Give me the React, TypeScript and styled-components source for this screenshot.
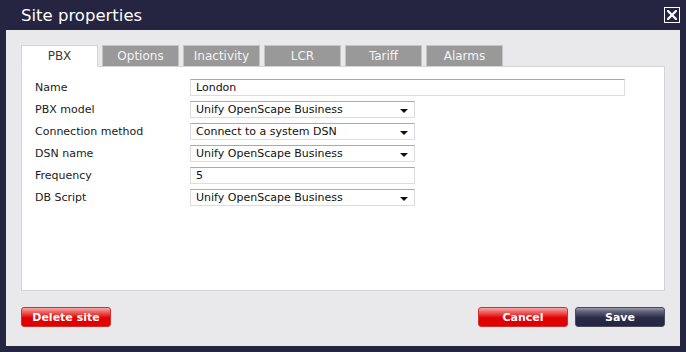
import React, {useState} from 'react';
import styled, {createGlobalStyle} from "styled-components";

const GlobalStyle = createGlobalStyle`
  html, body {
    margin: 0;
    padding: 0;
    background: #252541;
  }
  body {
    font-family: "DejaVu Sans", Verdana, sans-serif;
  }
`

const Dialog = styled.div`
  width: 686px;
  height: 352px;
  display: flex;
  flex-direction: column;
  background: #252541;
`
const TitleBar = styled.div`
  height: 30px;
  display: flex;
  align-items: center;
  justify-content: space-between;
  padding: 0 6px 0 21px;
  box-sizing: border-box;
  color: #ffffff;
  font-size: 16.5px;
`
const CloseButton = styled.div`
  width: 16px;
  height: 16px;
  box-sizing: border-box;
  border: 1.5px solid #ffffff;
  display: flex;
  align-items: center;
  justify-content: center;
  cursor: pointer;
  margin-bottom: 1px;
`
const Body = styled.div`
  flex: 1;
  margin: 0 6px 6px;
  background: #e9e9eb;
  padding: 15px 15px 0;
  display: flex;
  flex-direction: column;
`
const TabRow = styled.div`
  display: flex;
  gap: 4px;
  height: 21px;
  position: relative;
  z-index: 1;
`
const Tab = styled.div<{active?: boolean}>`
  width: 77px;
  box-sizing: border-box;
  display: flex;
  align-items: center;
  justify-content: center;
  font-size: 12px;
  cursor: pointer;
  background: ${props => props.active ? '#ffffff' : '#999999'};
  color: ${props => props.active ? '#3a3a3a' : '#f4f4f4'};
  border: 1px solid ${props => props.active ? '#d4d4d4' : '#c4c4c4'};
  border-bottom: ${props => props.active ? '1px solid #ffffff' : 'none'};
  height: ${props => props.active ? '22px' : '21px'};
`
const Panel = styled.div`
  height: 225px;
  box-sizing: border-box;
  background: #ffffff;
  border: 1px solid #d4d4d4;
  padding: 12px 13px;
  display: grid;
  grid-template-columns: 155px 1fr;
  grid-auto-rows: 17px;
  row-gap: 5px;
  align-content: start;
`
const Label = styled.div`
  font-size: 11px;
  color: #1a1a1a;
  display: flex;
  align-items: center;
`
const Field = styled.div<{wide?: boolean}>`
  width: ${props => props.wide ? '435px' : '225px'};
  height: 17px;
  box-sizing: border-box;
  border: 1px solid #dcdce2;
  border-top-color: #a9a9b2;
  display: flex;
  align-items: center;
  justify-content: space-between;
  padding: 0 5px 0 5px;
  font-size: 11px;
  color: #111111;
  background: #ffffff;
`
const Arrow = styled.span`
  width: 0;
  height: 0;
  border-left: 4px solid transparent;
  border-right: 4px solid transparent;
  border-top: 4px solid #111111;
  margin-top: 3px;
  margin-right: 1px;
`
const Footer = styled.div`
  display: flex;
  justify-content: space-between;
  align-items: center;
  margin-top: 16px;
`
const ButtonGroup = styled.div`
  display: flex;
  gap: 7px;
`
const Button = styled.button<{variant?: 'red' | 'dark'}>`
  width: 90px;
  height: 20px;
  border-radius: 3px;
  font-family: "DejaVu Sans", Verdana, sans-serif;
  font-size: 11px;
  font-weight: bold;
  color: #ffffff;
  padding: 0;
  cursor: pointer;
  border: 1px solid ${props => props.variant === 'dark' ? '#4a4a5e' : '#d23030'};
  background: ${props => props.variant === 'dark'
    ? 'linear-gradient(to bottom, #9a9aa8 0%, #60607a 20%, #2a2a46 55%, #252541 100%)'
    : 'linear-gradient(to bottom, #f6a8a8 0%, #ee6a6a 20%, #e20000 55%, #e00000 100%)'};
`

const tabs = ['PBX', 'Options', 'Inactivity', 'LCR', 'Tariff', 'Alarms']

const rows: {label: string, value: string, select?: boolean, wide?: boolean}[] = [
    {label: 'Name', value: 'London', wide: true},
    {label: 'PBX model', value: 'Unify OpenScape Business', select: true},
    {label: 'Connection method', value: 'Connect to a system DSN', select: true},
    {label: 'DSN name', value: 'Unify OpenScape Business', select: true},
    {label: 'Frequency', value: '5'},
    {label: 'DB Script', value: 'Unify OpenScape Business', select: true},
]

const App: React.FC = () => {
    const [selected, setSelected] = useState('PBX')
    return (
        <>
            <GlobalStyle/>
            <Dialog>
                <TitleBar>
                    <span>Site properties</span>
                    <CloseButton>
                        <svg width="10" height="10" viewBox="0 0 10 10">
                            <path d="M1 1 L9 9 M9 1 L1 9" stroke="#ffffff" strokeWidth="2.2" strokeLinecap="square"/>
                        </svg>
                    </CloseButton>
                </TitleBar>
                <Body>
                    <TabRow>
                        {tabs.map(t => (
                            <Tab key={t} active={t === selected} onClick={() => setSelected(t)}>{t}</Tab>
                        ))}
                    </TabRow>
                    <Panel>
                        {rows.map(r => (
                            <React.Fragment key={r.label}>
                                <Label>{r.label}</Label>
                                <Field wide={r.wide}>
                                    <span>{r.value}</span>
                                    {r.select && <Arrow/>}
                                </Field>
                            </React.Fragment>
                        ))}
                    </Panel>
                    <Footer>
                        <Button variant="red">Delete site</Button>
                        <ButtonGroup>
                            <Button variant="red">Cancel</Button>
                            <Button variant="dark">Save</Button>
                        </ButtonGroup>
                    </Footer>
                </Body>
            </Dialog>
        </>
    );
};

export default App;
